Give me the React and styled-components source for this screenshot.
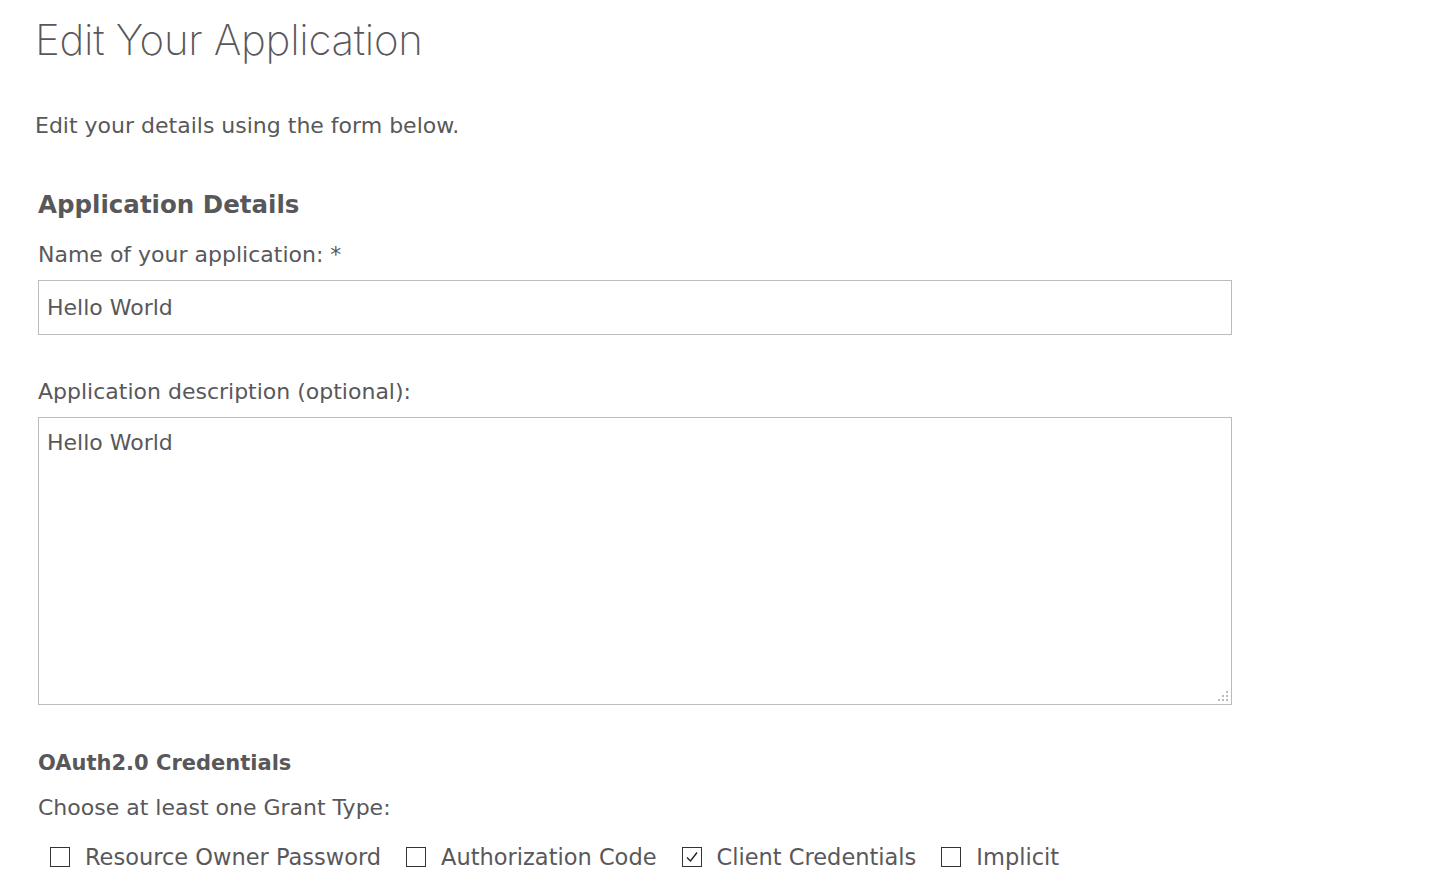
import React from "react";
import styled, { createGlobalStyle } from "styled-components";

const Global = createGlobalStyle`
  html, body { margin: 0; padding: 0; background: #fff; }
  body { font-family: "DejaVu Sans", "Liberation Sans", sans-serif; color: #58585b; }
`;

const Page = styled.div`
  padding: 12px 0 0 35px;
`;

const Title = styled.h1`
  margin: 0;
  font-family: Inter, "Liberation Sans", sans-serif;
  font-weight: 200;
  font-size: 42px;
  letter-spacing: -0.3px;
  line-height: 56px;
  color: #58585b;
`;

const Intro = styled.p`
  margin: 45px 0 0;
  font-size: 22px;
  line-height: 26px;
`;

const Form = styled.form`
  margin: 0 0 0 3px;
  width: 1194px;
  display: flex;
  flex-direction: column;
`;

const SectionTitle = styled.h2`
  margin: ${(p) => p.$top}px 0 0;
  font-size: ${(p) => p.$size}px;
  line-height: 30px;
  font-weight: 700;
`;

const Label = styled.label`
  display: block;
  margin-top: ${(p) => p.$top}px;
  font-size: 22px;
  line-height: 26px;
`;

const Input = styled.input`
  box-sizing: border-box;
  margin-top: 12px;
  width: 100%;
  height: 55px;
  padding: 0 8px;
  border: 1px solid #bcbcbc;
  border-radius: 0;
  font-family: inherit;
  font-size: 22px;
  color: #58585b;
  outline: none;
`;

const AreaWrap = styled.div`
  position: relative;
  margin-top: 12px;
  height: 288px;
`;

const TextArea = styled.textarea`
  box-sizing: border-box;
  display: block;
  width: 100%;
  height: 100%;
  padding: 12px 8px;
  border: 1px solid #bcbcbc;
  border-radius: 0;
  font-family: inherit;
  font-size: 22px;
  line-height: 26px;
  color: #58585b;
  resize: none;
  outline: none;
`;

const Grip = styled.svg`
  position: absolute;
  right: 3px;
  bottom: 3px;
  pointer-events: none;
`;

const GrantRow = styled.div`
  display: flex;
  align-items: center;
  margin-top: 23px;
  padding-left: 12px;
  gap: 25px;
`;

const Grant = styled.label`
  display: flex;
  align-items: center;
  gap: 15px;
  font-size: 22.5px;
  line-height: 26px;
`;

const Box = styled.span`
  box-sizing: border-box;
  width: 20px;
  height: 20px;
  border: 1px solid #333;
  display: inline-flex;
  align-items: center;
  justify-content: center;
  background: #fff;
`;

const Check = () => (
  <svg width="16" height="16" viewBox="0 0 16 16">
    <path d="M3 8.5 L6.5 12 L13 3.5" fill="none" stroke="#222" strokeWidth="1.4" />
  </svg>
);

const grants = [
  { label: "Resource Owner Password", checked: false },
  { label: "Authorization Code", checked: false },
  { label: "Client Credentials", checked: true },
  { label: "Implicit", checked: false },
];

export default function App() {
  return (
    <>
      <Global />
      <Page>
        <Title>Edit Your Application</Title>
        <Intro>Edit your details using the form below.</Intro>
        <Form onSubmit={(e) => e.preventDefault()}>
          <SectionTitle $top={51} $size={24.5}>Application Details</SectionTitle>
          <Label $top={22}>Name of your application: *</Label>
          <Input defaultValue="Hello World" />
          <Label $top={44}>Application description (optional):</Label>
          <AreaWrap>
            <TextArea defaultValue="Hello World" />
            <Grip width="12" height="12" viewBox="0 0 12 12">
              <g fill="#bbb">
                <rect x="9" y="1" width="2" height="2" />
                <rect x="5" y="5" width="2" height="2" />
                <rect x="9" y="5" width="2" height="2" />
                <rect x="1" y="9" width="2" height="2" />
                <rect x="5" y="9" width="2" height="2" />
                <rect x="9" y="9" width="2" height="2" />
              </g>
            </Grip>
          </AreaWrap>
          <SectionTitle $top={43} $size={21}>OAuth2.0 Credentials</SectionTitle>
          <Label $top={17}>Choose at least one Grant Type:</Label>
          <GrantRow>
            {grants.map((g) => (
              <Grant key={g.label}>
                <Box>{g.checked && <Check />}</Box>
                {g.label}
              </Grant>
            ))}
          </GrantRow>
        </Form>
      </Page>
    </>
  );
}
